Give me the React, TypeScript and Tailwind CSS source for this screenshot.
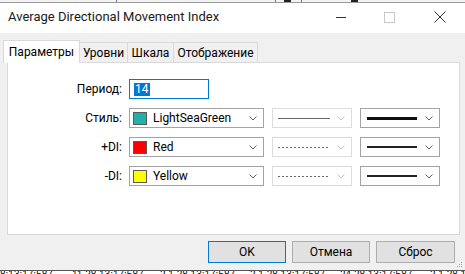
import React from 'react'

const Chevron = ({ disabled = false }: { disabled?: boolean }) => (
  <svg width="8" height="5" viewBox="0 0 8 5" className="shrink-0">
    <path d="M0.5 0.5 L4 4 L7.5 0.5" fill="none" stroke={disabled ? '#c4c4c4' : '#606060'} strokeWidth="1" />
  </svg>
)

const rows = [
  { label: 'Стиль:', name: 'LightSeaGreen', color: '#20b2aa', dotted: false, thick: 3 },
  { label: '+DI:', name: 'Red', color: '#ff0000', dotted: true, thick: 2 },
  { label: '-DI:', name: 'Yellow', color: '#ffff00', dotted: true, thick: 2 },
]

const chartLabels = [
  { text: '8:13:17:587', w: 'w-[72px]' },
  { text: '11.28.13:17:587', w: 'w-[88px]' },
  { text: '2.1.28.13:17:587', w: 'w-[90px]' },
  { text: '2.1.28.13:17:587', w: 'w-[90px]' },
  { text: '24.28.13:17:587', w: 'w-[90px]' },
  { text: '2.1.28.13', w: 'w-[40px]' },
]

export default function App() {
  return (
    <div className="w-[465px] h-[274px] overflow-hidden bg-white text-[#000] font-['Segoe_UI',Roboto,'Liberation_Sans',sans-serif]">
      {/* chart behind, top edge */}
      <div className="h-[3px] bg-[#f3f3f3] border-b border-[#9a9a9a] flex items-start">
        <div className="ml-[116px] w-[1px] h-[2px] bg-[#777]" />
        <div className="ml-[158px] w-[1px] h-[2px] bg-[#777]" />
        <div className="ml-[8px] w-[7px] h-[2px] bg-[#222]" />
        <div className="ml-[10px] w-[1px] h-[2px] bg-[#777]" />
        <div className="ml-[49px] w-[7px] h-[2px] bg-[#222]" />
      </div>

      {/* title bar */}
      <div className="h-[30px] bg-white flex items-center">
        <span className="ml-[8px] text-[13px] text-[#1a1a1a] mt-[-2px]">Average Directional Movement Index</span>
        <div className="ml-auto flex items-center mt-[-2px]">
          <div className="w-[10px] h-[1px] bg-[#333] mr-[38px]" />
          <div className="w-[11px] h-[11px] border border-[#c8c8c8] mr-[39px]" />
          <svg width="12" height="12" viewBox="0 0 12 12" className="mr-[19px]">
            <path d="M0.5 0.5 L11.5 11.5 M11.5 0.5 L0.5 11.5" stroke="#333" strokeWidth="1" />
          </svg>
        </div>
      </div>

      {/* dialog body */}
      <div className="h-[237px] bg-[#f0f0f0] pt-[7px] relative">
        {/* tabs */}
        <div className="flex items-end h-[22px] ml-[3px] text-[12px]">
          <div className="relative z-10 h-[23px] mb-[-1px] w-[77px] bg-white border border-b-0 border-[#d9d9d9] flex items-center justify-center pb-[1px]">
            Параметры
          </div>
          <div className="h-[20px] w-[48px] border border-l-0 border-b-0 border-[#d9d9d9] flex items-center justify-center">Уровни</div>
          <div className="h-[20px] w-[46px] border border-l-0 border-b-0 border-[#d9d9d9] flex items-center justify-center">Шкала</div>
          <div className="h-[20px] w-[84px] border border-l-0 border-b-0 border-[#d9d9d9] flex items-center justify-center">Отображение</div>
        </div>

        {/* panel */}
        <div className="ml-[7px] w-[453px] h-[173px] bg-white border border-[#d9d9d9] pt-[16px] text-[12px]">
          <div className="flex flex-col gap-[9px]">
            <div className="flex items-center h-[20px]">
              <div className="w-[114px] text-right">Период:</div>
              <div className="ml-[7px] w-[80px] h-[20px] border border-[#0078d7] flex items-center pl-[4px]">
                <span className="bg-[#0078d7] text-white leading-[13px] px-[1px]">14</span>
              </div>
            </div>
            {rows.map((r) => (
              <div key={r.label} className="flex items-center h-[20px]">
                <div className="w-[114px] text-right">{r.label}</div>
                <div className="ml-[7px] w-[135px] h-[20px] border border-[#a3a3a3] flex items-center pl-[3px] pr-[6px]">
                  <div className="w-[14px] h-[13px] border border-[#5a5a5a]" style={{ backgroundColor: r.color }} />
                  <span className="ml-[6px]">{r.name}</span>
                  <div className="ml-auto">
                    <Chevron />
                  </div>
                </div>
                <div className="ml-[8px] w-[80px] h-[20px] border border-[#dcdcdc] flex items-center pl-[5px] pr-[6px]">
                  {r.dotted ? (
                    <div className="w-[52px] h-[1px] bg-[repeating-linear-gradient(90deg,#6a6a6a_0px,#6a6a6a_2px,transparent_2px,transparent_4px)]" />
                  ) : (
                    <div className="w-[52px] h-[1px] bg-[#666]" />
                  )}
                  <div className="ml-auto">
                    <Chevron disabled />
                  </div>
                </div>
                <div className="ml-[8px] w-[80px] h-[20px] border border-[#a3a3a3] flex items-center pl-[6px] pr-[6px]">
                  <div className={r.thick === 3 ? 'w-[50px] h-[3px] bg-[#111]' : 'w-[50px] h-[2px] bg-[#222]'} />
                  <div className="ml-auto">
                    <Chevron />
                  </div>
                </div>
              </div>
            ))}
          </div>
        </div>

        {/* buttons */}
        <div className="flex justify-end gap-[6px] mr-[10px] mt-[6px] text-[12px]">
          <button className="w-[78px] h-[22px] bg-[#e1e1e1] border border-[#0078d7] flex items-center justify-center">OK</button>
          <button className="w-[78px] h-[22px] bg-[#e1e1e1] border border-[#adadad] flex items-center justify-center">Отмена</button>
          <button className="w-[79px] h-[22px] bg-[#e1e1e1] border border-[#adadad] flex items-center justify-center">Сброс</button>
        </div>

        {/* size grip */}
        <svg width="6" height="6" viewBox="0 0 6 6" className="absolute right-[2px] bottom-[2px]">
          <rect x="4" y="0" width="1" height="1" fill="#a0a0a0" />
          <rect x="2" y="2" width="1" height="1" fill="#a0a0a0" />
          <rect x="4" y="2" width="1" height="1" fill="#a0a0a0" />
          <rect x="0" y="4" width="1" height="1" fill="#a0a0a0" />
          <rect x="2" y="4" width="1" height="1" fill="#a0a0a0" />
          <rect x="4" y="4" width="1" height="1" fill="#a0a0a0" />
        </svg>
      </div>

      {/* chart behind, bottom edge */}
      <div className="h-[4px] bg-white border-t border-[#555] overflow-hidden flex items-start font-['Liberation_Sans',sans-serif] text-[10px] leading-[10px] text-[#111]">
        {chartLabels.map((l, i) => (
          <div key={i} className={`${l.w} shrink-0 mt-[-1px] whitespace-nowrap overflow-hidden`}>
            {l.text}
          </div>
        ))}
      </div>
    </div>
  )
}
